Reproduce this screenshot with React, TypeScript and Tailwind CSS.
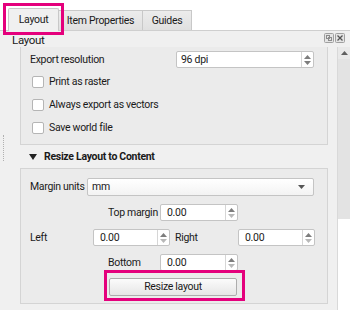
import React from "react";

function SpinArrows({ downDim }: { downDim?: boolean }) {
  return (
    <div className="flex w-[12px] flex-col items-center justify-center gap-[2px] border-l border-[#d6d6d6]">
      <svg width="7" height="4" viewBox="0 0 7 4">
        <path d="M0 4 L3.5 0 L7 4Z" fill="#7d7d7d" />
      </svg>
      <svg width="7" height="4" viewBox="0 0 7 4">
        <path d="M0 0 L3.5 4 L7 0Z" fill={downDim ? "#b8b8b8" : "#7d7d7d"} />
      </svg>
    </div>
  );
}

function SpinBox({ value, className, downDim }: { value: string; className: string; downDim?: boolean }) {
  return (
    <div className={`flex h-[17px] shrink-0 rounded-[2px] border border-[#c4c4c4] bg-white ${className}`}>
      <div className="flex-1 pl-[6px] leading-[15px] text-[#1a1a1a]">{value}</div>
      <SpinArrows downDim={downDim} />
    </div>
  );
}

function CheckRow({ label }: { label: string }) {
  return (
    <div className="flex h-[23px] items-center pl-[11px]">
      <div className="h-[12px] w-[12px] rounded-[2px] border border-[#b5b5b5] bg-white" />
      <span className="ml-[5px]">{label}</span>
    </div>
  );
}

export default function App() {
  return (
    <div className="relative flex h-[310px] w-[350px] flex-col overflow-hidden whitespace-nowrap bg-[#f0f0f0] font-['Roboto',Arial,sans-serif] text-[10.5px] tracking-[-0.3px] text-[#1a1a1a]">
      {/* tab bar */}
      <div className="flex h-[31px] items-end border-b border-[#cfcfcf] bg-white pl-[8px]">
        <div className="relative z-10 -mb-px flex h-[23px] w-[51px] items-center justify-center rounded-t-[2px] border border-b-0 border-[#c8c8c8] bg-[#f0f0f0]">
          Layout
        </div>
        <div className="flex h-[20px] w-[84px] items-center justify-center border border-l-0 border-b-0 border-[#c8c8c8] bg-gradient-to-b from-[#ececec] to-[#e0e0e0]">
          Item Properties
        </div>
        <div className="flex h-[20px] w-[49px] items-center justify-center border border-l-0 border-b-0 border-[#c8c8c8] bg-gradient-to-b from-[#ececec] to-[#e0e0e0]">
          Guides
        </div>
      </div>

      {/* dock title */}
      <div className="flex h-[16px] items-start justify-between pl-[12px] pr-[5px]">
        <span className="text-[11.5px] leading-[18px]">Layout</span>
        <div className="mt-[2px] flex gap-[1px]">
          <svg width="10" height="10" viewBox="0 0 10 10">
            <rect x="0.5" y="0.5" width="9" height="9" rx="1" fill="#e4e4e4" stroke="#a0a0a0" />
            <rect x="2.5" y="2.5" width="3" height="3" fill="none" stroke="#8c8c8c" />
            <rect x="4.5" y="4.5" width="3" height="3" fill="none" stroke="#8c8c8c" />
          </svg>
          <svg width="10" height="10" viewBox="0 0 10 10">
            <rect x="0.5" y="0.5" width="9" height="9" rx="1" fill="#e4e4e4" stroke="#a0a0a0" />
            <path d="M2.5 2.5 L7.5 7.5 M7.5 2.5 L2.5 7.5" stroke="#555" strokeWidth="1.3" />
          </svg>
        </div>
      </div>

      {/* body */}
      <div className="flex flex-1">
        <div className="flex flex-1">
          {/* splitter grip */}
          <div className="flex w-[20px] justify-center pr-[13px] pt-[88px]">
            <div className="h-[26px] w-px border-l border-dotted border-[#b0b0b0]" />
          </div>

          <div className="flex flex-1 flex-col pr-[9px]">
            {/* export group */}
            <div className="border-x border-b border-[#d4d4d4] bg-[#ebebeb] pb-[5px]">
              <div className="flex items-center pt-[4px]">
                <span className="pl-[9px]">Export resolution</span>
                <div className="ml-auto mr-[13px] flex h-[17px] w-[138px] rounded-[2px] border border-[#c4c4c4] bg-white">
                  <div className="flex-1 pl-[4px] leading-[15px]">96 dpi</div>
                  <SpinArrows />
                </div>
              </div>
              <div className="pt-[2px]">
                <CheckRow label="Print as raster" />
                <CheckRow label="Always export as vectors" />
                <CheckRow label="Save world file" />
              </div>
            </div>

            {/* section header */}
            <div className="flex h-[23px] items-center pl-[9px] pt-[1px]">
              <svg width="8" height="6" viewBox="0 0 8 6">
                <path d="M0 0 L8 0 L4 6Z" fill="#222" />
              </svg>
              <span className="ml-[7px] font-bold">Resize Layout to Content</span>
            </div>

            {/* resize group */}
            <div className="h-[136px] border border-[#d4d4d4] bg-[#ebebeb] pt-[9px]">
              <div className="flex items-center">
                <span className="w-[66px] shrink-0 pl-[9px]">Margin units</span>
                <div className="mr-[13px] flex h-[18px] flex-1 items-center justify-between rounded-[2px] border border-[#c4c4c4] bg-gradient-to-b from-white to-[#f3f3f3] pl-[4px] pr-[8px]">
                  <span>mm</span>
                  <svg width="7" height="4" viewBox="0 0 7 4">
                    <path d="M0 0 L3.5 4 L7 0Z" fill="#555" />
                  </svg>
                </div>
              </div>
              <div className="mt-[8px] flex items-center pl-[87px]">
                <span className="w-[52px] shrink-0">Top margin</span>
                <SpinBox value="0.00" className="w-[78px]" downDim />
              </div>
              <div className="mt-[8px] flex items-center">
                <span className="w-[72px] shrink-0 pl-[9px]">Left</span>
                <SpinBox value="0.00" className="w-[77px]" downDim />
                <span className="w-[68px] shrink-0 pl-[5px]">Right</span>
                <SpinBox value="0.00" className="w-[77px]" downDim />
              </div>
              <div className="mt-[8px] flex items-center pl-[87px]">
                <span className="w-[52px] shrink-0">Bottom</span>
                <SpinBox value="0.00" className="w-[78px]" downDim />
              </div>
              <div className="mt-[7px] pl-[88px]">
                <div className="flex h-[18px] w-[128px] items-center justify-center rounded-[2px] border border-[#adadad] bg-gradient-to-b from-[#fbfbfb] to-[#e6e6e6]">
                  Resize layout
                </div>
              </div>
            </div>
          </div>
        </div>

        {/* scrollbar */}
        <div className="flex w-[13px] flex-col border-l border-[#d9d9d9] bg-white">
          <div className="flex h-[12px] items-center justify-center bg-[#e9e9e9]">
            <svg width="7" height="4" viewBox="0 0 7 4">
              <path d="M0 4 L3.5 0 L7 4Z" fill="#606060" />
            </svg>
          </div>
          <div className="h-[160px] bg-[#e3e3e3]" />
        </div>
      </div>

      {/* annotation highlights */}
      <div className="pointer-events-none absolute left-[3px] top-[3px] h-[32px] w-[61px] border-[3px] border-[#e4007c]" />
      <div className="pointer-events-none absolute left-[104px] top-[270px] h-[31px] w-[141px] border-[3px] border-[#e4007c]" />
    </div>
  );
}
